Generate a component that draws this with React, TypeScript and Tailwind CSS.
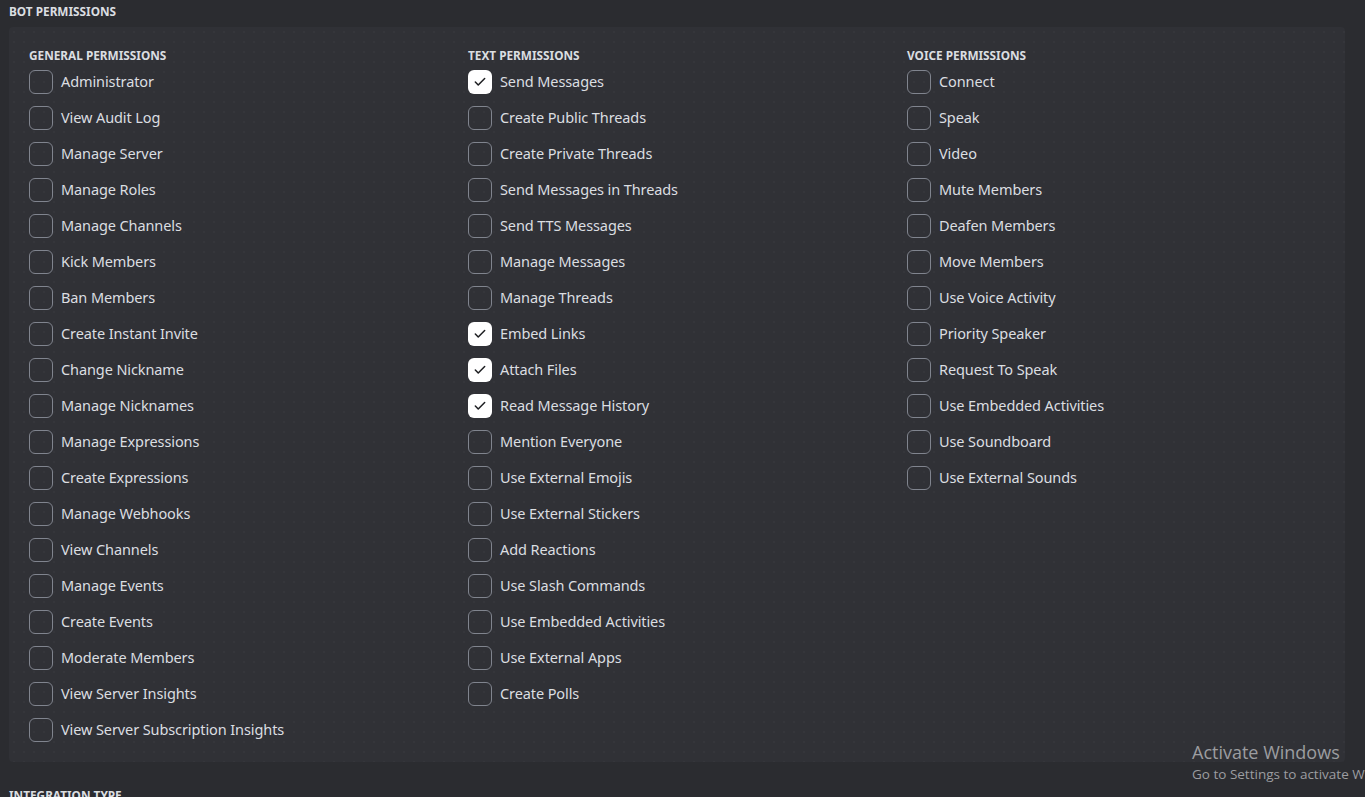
import { Check } from 'lucide-react'

const general = [
  'Administrator',
  'View Audit Log',
  'Manage Server',
  'Manage Roles',
  'Manage Channels',
  'Kick Members',
  'Ban Members',
  'Create Instant Invite',
  'Change Nickname',
  'Manage Nicknames',
  'Manage Expressions',
  'Create Expressions',
  'Manage Webhooks',
  'View Channels',
  'Manage Events',
  'Create Events',
  'Moderate Members',
  'View Server Insights',
  'View Server Subscription Insights',
]

const text = [
  'Send Messages',
  'Create Public Threads',
  'Create Private Threads',
  'Send Messages in Threads',
  'Send TTS Messages',
  'Manage Messages',
  'Manage Threads',
  'Embed Links',
  'Attach Files',
  'Read Message History',
  'Mention Everyone',
  'Use External Emojis',
  'Use External Stickers',
  'Add Reactions',
  'Use Slash Commands',
  'Use Embedded Activities',
  'Use External Apps',
  'Create Polls',
]

const voice = [
  'Connect',
  'Speak',
  'Video',
  'Mute Members',
  'Deafen Members',
  'Move Members',
  'Use Voice Activity',
  'Priority Speaker',
  'Request To Speak',
  'Use Embedded Activities',
  'Use Soundboard',
  'Use External Sounds',
]

const initialChecked = ['Send Messages', 'Embed Links', 'Attach Files', 'Read Message History']

function PermissionColumn({ title, items }: { title: string; items: string[] }) {
  return (
    <div className="flex flex-col">
      <h3 className="text-[11.8px] font-bold uppercase leading-[14px] text-[#dbdee1] mt-px mb-[8px]">{title}</h3>
      <div className="flex flex-col gap-3">
        {items.map((label) => {
          const checked = title === 'Text Permissions' && initialChecked.includes(label)
          return (
            <label key={label} className="flex items-center gap-2 h-6 cursor-pointer">
              {checked ? (
                <span className="w-6 h-6 rounded-[6px] bg-white flex items-center justify-center">
                  <Check size={14} strokeWidth={2.6} className="text-[#1e1f22]" />
                </span>
              ) : (
                <span className="w-6 h-6 rounded-[6px] border border-[#80848e]" />
              )}
              <span className="text-[14.5px] text-[#dbdee1] tracking-[-0.1px]">{label}</span>
            </label>
          )
        })}
      </div>
    </div>
  )
}

export default function App() {
  return (
    <div
      className="relative h-[797px] overflow-hidden bg-[#2b2c30] px-[9px] pt-[4px]"
      style={{ fontFamily: '"Noto Sans", "Open Sans", sans-serif' }}
    >
      <h2 className="text-[11.8px] font-bold uppercase leading-[14px] text-[#dbdee1]">Bot Permissions</h2>
      <div className="mt-[9px] w-[1336px] rounded-[4px] bg-[#303136] bg-[radial-gradient(circle,rgba(255,255,255,0.05)_0.6px,transparent_0.8px)] bg-[length:10px_10px] px-5 pt-5 pb-5">
        <div className="grid grid-cols-[439px_439px_1fr]">
          <PermissionColumn title="General Permissions" items={general} />
          <PermissionColumn title="Text Permissions" items={text} />
          <PermissionColumn title="Voice Permissions" items={voice} />
        </div>
      </div>
      <h2 className="mt-[26px] text-[11.8px] font-bold uppercase leading-[14px] text-[#dbdee1]">Integration Type</h2>

      <div className="absolute left-[1192px] top-[740px] pointer-events-none select-none" style={{ fontFamily: '"Open Sans", "Noto Sans", sans-serif' }}>
        <div className="text-[18px] leading-6 text-[#9c9da0]">Activate Windows</div>
        <div className="text-[13.5px] leading-5 text-[#9c9da0] whitespace-nowrap">Go to Settings to activate Windows.</div>
      </div>
    </div>
  )
}
